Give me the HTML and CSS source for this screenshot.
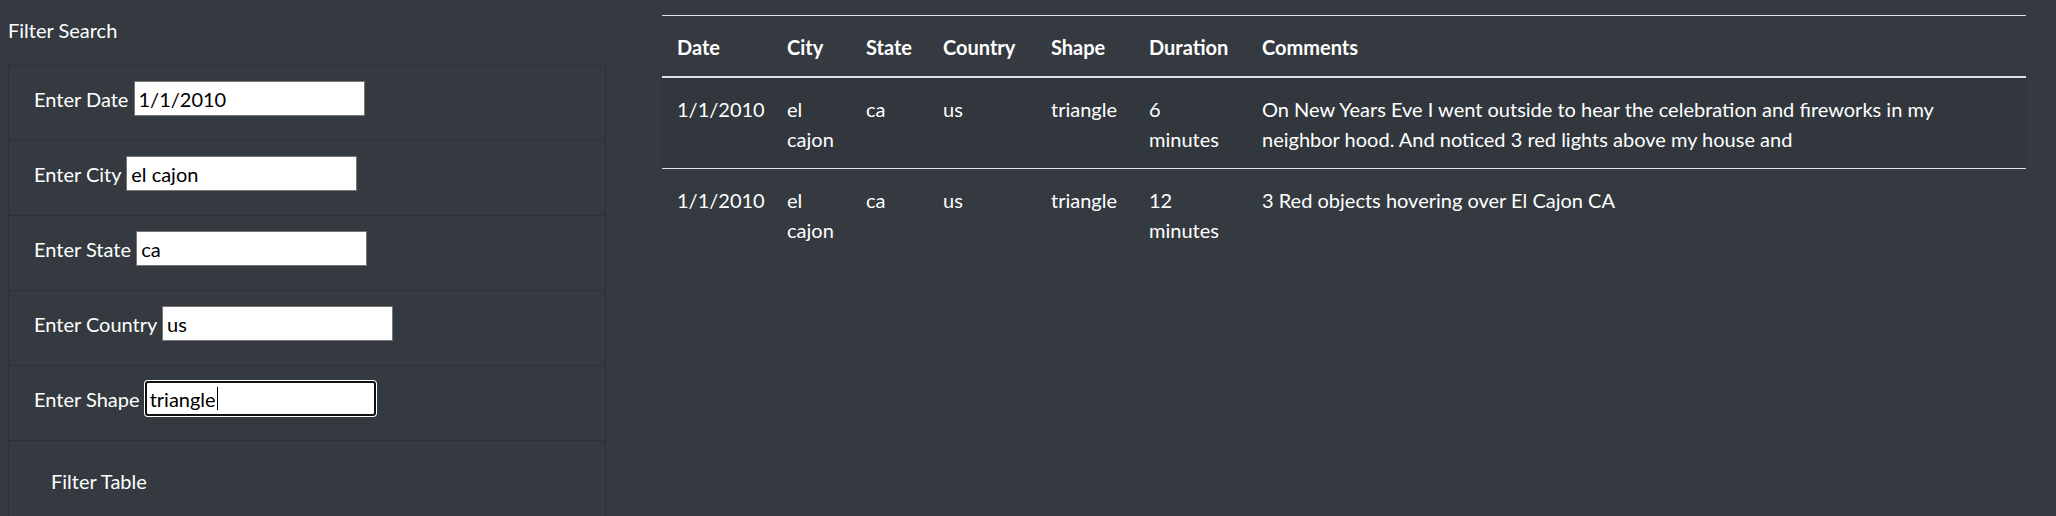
FILE: index.html
```html
<!DOCTYPE html>
<html lang="en">
<head>
<meta charset="utf-8">
<title>UFO Sightings</title>
<link rel="stylesheet" href="styles.css">
</head>
<body>
<div class="page">
  <aside class="sidebar">
    <h5 class="side-title">Filter Search</h5>
    <ul class="filters">
      <li class="filter-item"><label class="filter-label">Enter Date <input class="filter-input" type="text" value="1/1/2010"></label></li>
      <li class="filter-item"><label class="filter-label">Enter City <input class="filter-input" type="text" value="el cajon"></label></li>
      <li class="filter-item"><label class="filter-label">Enter State <input class="filter-input" type="text" value="ca"></label></li>
      <li class="filter-item"><label class="filter-label">Enter Country <input class="filter-input" type="text" value="us"></label></li>
      <li class="filter-item"><label class="filter-label">Enter Shape <span class="input-wrap"><input class="filter-input is-focused" type="text" value="triangle"><span class="caret"></span></span></label></li>
      <li class="filter-item filter-last"><button class="filter-btn" type="button">Filter Table</button></li>
    </ul>
  </aside>
  <main class="main">
    <table class="ufo-table">
      <colgroup>
        <col class="c-date"><col class="c-city"><col class="c-state"><col class="c-country"><col class="c-shape"><col class="c-duration"><col class="c-comments">
      </colgroup>
      <thead>
        <tr><th>Date</th><th>City</th><th>State</th><th>Country</th><th>Shape</th><th>Duration</th><th>Comments</th></tr>
      </thead>
      <tbody>
        <tr class="striped"><td>1/1/2010</td><td>el cajon</td><td>ca</td><td>us</td><td>triangle</td><td>6 minutes</td><td>On New Years Eve I went outside to hear the celebration and fireworks in my neighbor hood. And noticed 3 red lights above my house and</td></tr>
        <tr><td>1/1/2010</td><td>el cajon</td><td>ca</td><td>us</td><td>triangle</td><td>12 minutes</td><td>3 Red objects hovering over El Cajon CA</td></tr>
      </tbody>
    </table>
  </main>
</div>
</body>
</html>
```
FILE: styles.css
```css
html, body {
  margin: 0;
  padding: 0;
}
body {
  background: #343a40;
  color: #fff;
  font-family: Lato, "Liberation Sans", sans-serif;
  font-size: 20px;
  line-height: 30px;
  height: 516px;
  overflow: hidden;
}
.page {
  display: flex;
  align-items: flex-start;
}
.sidebar {
  width: 598px;
  margin-left: 8px;
  flex: none;
}
.side-title {
  margin: 15px 0 20px 0;
  font-size: 20px;
  font-weight: 400;
  line-height: 30px;
}
.filters {
  list-style: none;
  margin: 0;
  padding: 0;
  border: 1px solid #2c3137;
  border-bottom: none;
}
.filter-item {
  box-sizing: border-box;
  height: 75px;
  padding: 15px 25px 0;
  border-top: 1px solid #2c3137;
}
.filter-item:first-child {
  border-top: none;
  height: 74px;
}
.filter-last {
  height: 90px;
  padding-top: 24px;
}
.filter-label {
  white-space: nowrap;
}
.input-wrap {
  position: relative;
  display: inline-block;
  vertical-align: baseline;
}
.filter-input {
  box-sizing: border-box;
  width: 231px;
  height: 35px;
  margin: 0;
  padding: 1px 4px;
  border: 1px solid #767676;
  border-radius: 0;
  background: #fff;
  color: #000;
  font-family: Lato, "Liberation Sans", sans-serif;
  font-size: 20px;
  outline: none;
  vertical-align: baseline;
}
.filter-input.is-focused {
  border: 2px solid #101010;
  border-radius: 3px;
  padding: 0 3px;
  box-shadow: 0 0 0 1px #fff;
}
.caret {
  position: absolute;
  left: 72px;
  top: 6px;
  width: 1px;
  height: 23px;
  background: #000;
}
.filter-btn {
  background: transparent;
  border: 1px solid transparent;
  color: #fff;
  font-family: Lato, "Liberation Sans", sans-serif;
  font-size: 20px;
  line-height: 30px;
  padding: 0 16px;
  margin: 0;
  cursor: pointer;
}
.main {
  margin-left: 56px;
  padding-top: 15px;
  width: 1364px;
  flex: none;
}
.ufo-table {
  width: 100%;
  border-collapse: collapse;
  table-layout: fixed;
}
.c-date { width: 110px; }
.c-city { width: 79px; }
.c-state { width: 77px; }
.c-country { width: 108px; }
.c-shape { width: 98px; }
.c-duration { width: 113px; }
.c-comments { width: auto; }
.ufo-table th,
.ufo-table td {
  text-align: left;
  vertical-align: top;
  padding: 16px 15px 14px;
  border-top: 1px solid #dee2e6;
  white-space: normal;
}
.ufo-table th {
  font-weight: 700;
  border-bottom: 2px solid #dee2e6;
}
.ufo-table tbody tr:first-child td {
  border-top: none;
}
.striped {
  background: rgba(0, 0, 0, 0.05);
}
```
